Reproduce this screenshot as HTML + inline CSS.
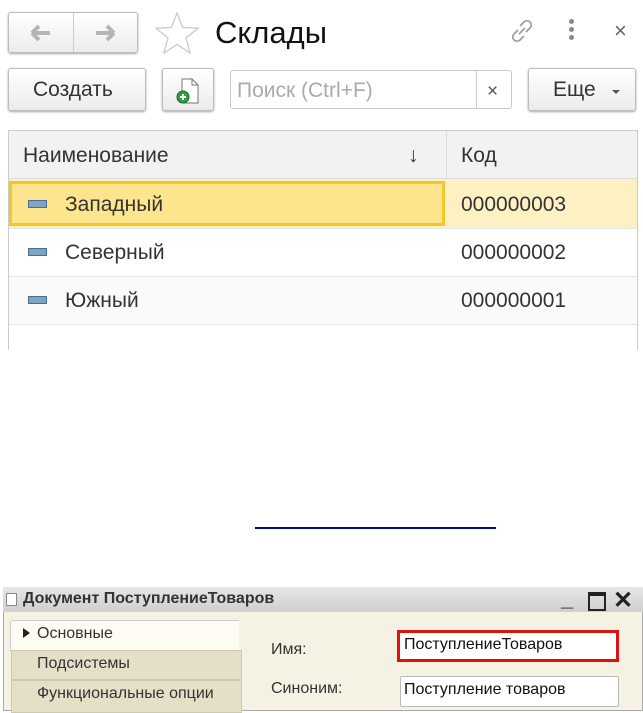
<!DOCTYPE html><html><head><meta charset="utf-8"><style>
body{margin:0;width:643px;height:711px;background:#fff;position:relative;overflow:hidden;font-family:"Liberation Sans",sans-serif;}
.a{position:absolute}
.btn{position:absolute;border:1px solid #bdbdbd;border-radius:3px;background:linear-gradient(#fff,#ececec);box-shadow:0 1px 2px rgba(0,0,0,.35);box-sizing:border-box}
.t{position:absolute;font-size:21px;color:#333}
</style></head><body>
<div class="btn" style="left:8px;top:12px;width:130px;height:41px"></div>
<div class="a" style="left:73px;top:13px;width:1px;height:39px;background:#ccc"></div>
<svg class="a" style="left:28px;top:22px" width="90" height="22"><path d="M4 11h18M4 11l7-7M4 11l7 7" stroke="#b5b5b5" stroke-width="4" fill="none"/><path d="M86 11H68M86 11l-7-7M86 11l-7 7" stroke="#b5b5b5" stroke-width="4" fill="none"/></svg>
<svg class="a" style="left:154px;top:10px" width="46" height="44"><path d="M23 3l5.6 14.5 15.4.7-12 9.8 4.1 15L23 34.5 9.9 43l4.1-15L2 18.2l15.4-.7z" fill="none" stroke="#c9c9c9" stroke-width="1.3"/></svg>
<div class="a" style="left:215px;top:15px;font-size:31px;color:#111">Склады</div>
<svg class="a" style="left:508px;top:17px" width="28" height="28"><path d="M12 9l4-4a4 4 0 016 6l-4 4M16 19l-4 4a4 4 0 01-6-6l4-4M11 17l6-6" stroke="#999" stroke-width="1.6" fill="none"/></svg>
<div class="a" style="left:569px;top:19px;width:5px;height:5px;border-radius:3px;background:#888;box-shadow:0 8px 0 #888,0 16px 0 #888"></div>
<div class="a" style="left:614px;top:18px;font-size:22px;color:#666">×</div>
<div class="btn" style="left:8px;top:68px;width:138px;height:43px"></div>
<div class="t" style="left:33px;top:78px">Создать</div>
<div class="btn" style="left:162px;top:68px;width:52px;height:43px"></div>
<svg class="a" style="left:172px;top:76px" width="32" height="30"><path d="M10 3h10l6 6v18H10z" fill="#fff" stroke="#777"/><path d="M20 3v6h6" fill="none" stroke="#777"/><circle cx="11" cy="21" r="6" fill="#2ea043" stroke="#1a6b2a"/><path d="M8 21h6M11 18v6" stroke="#fff" stroke-width="2"/></svg>
<div class="a" style="left:230px;top:70px;width:282px;height:39px;border:1px solid #c8c8c8;border-radius:3px;box-sizing:border-box"></div>
<div class="a" style="left:476px;top:71px;width:1px;height:37px;background:#ccc"></div>
<div class="t" style="left:237px;top:79px;color:#aaa">Поиск (Ctrl+F)</div>
<div class="a" style="left:487px;top:81px;font-size:19px;color:#555">×</div>
<div class="btn" style="left:528px;top:68px;width:108px;height:43px"></div>
<div class="t" style="left:553px;top:78px">Еще</div>
<div class="a" style="left:612px;top:90px;border:4px solid transparent;border-top:4px solid #555"></div>
<div class="a" style="left:8px;top:130px;width:630px;height:220px;border:1px solid #ccc;border-bottom:none;box-sizing:border-box"></div>
<div class="a" style="left:9px;top:131px;width:628px;height:47px;background:#f2f2f2;border-bottom:1px solid #ddd"></div>
<div class="a" style="left:446px;top:131px;width:1px;height:47px;background:#ddd"></div>
<div class="t" style="left:23px;top:144px">Наименование</div>
<div class="t" style="left:408px;top:144px">↓</div>
<div class="t" style="left:461px;top:144px">Код</div>
<div class="a" style="left:9px;top:179px;width:628px;height:49px;background:#fdf1c4"></div>
<div class="a" style="left:9px;top:181px;width:436px;height:45px;background:#fde58d;border:3px solid #f5c62b;box-sizing:border-box"></div>
<div class="a" style="left:9px;top:228px;width:628px;height:1px;background:#e5e5e5"></div>
<div class="a" style="left:9px;top:276px;width:628px;height:1px;background:#e5e5e5"></div>
<div class="a" style="left:9px;top:277px;width:628px;height:47px;background:#fafafa"></div>
<div class="a" style="left:9px;top:324px;width:628px;height:1px;background:#e5e5e5"></div>
<div class="a" style="left:28px;top:200px;width:17px;height:6px;background:#7fa3c6;border:1px solid #4a6e90"></div>
<div class="a" style="left:28px;top:248px;width:17px;height:6px;background:#7fa3c6;border:1px solid #4a6e90"></div>
<div class="a" style="left:28px;top:296px;width:17px;height:6px;background:#7fa3c6;border:1px solid #4a6e90"></div>
<div class="t" style="left:65px;top:193px">Западный</div><div class="t" style="left:461px;top:193px">000000003</div>
<div class="t" style="left:65px;top:241px">Северный</div><div class="t" style="left:461px;top:241px">000000002</div>
<div class="t" style="left:65px;top:289px">Южный</div><div class="t" style="left:461px;top:289px">000000001</div>
<div class="a" style="left:255px;top:527px;width:241px;height:2px;background:#000a8c"></div>
<div class="a" style="left:3px;top:587px;width:640px;height:124px;background:#f5f1e3;border:1px solid #aaa;box-sizing:border-box"></div>
<div class="a" style="left:3px;top:587px;width:640px;height:25px;background:linear-gradient(#e6e6e6,#cfcfcf)"></div>
<div class="a" style="left:6px;top:593px;width:9px;height:11px;background:#fff;border:1px solid #888"></div>
<div class="a" style="left:23px;top:590px;font-size:16px;font-weight:bold;color:#333">Документ ПоступлениеТоваров</div>
<div class="a" style="left:561px;top:586px;font-size:22px;font-weight:bold;color:#222">_</div>
<div class="a" style="left:588px;top:592px;width:14px;height:13px;border:2px solid #222;border-top-width:4px"></div>
<div class="a" style="left:613px;top:586px;font-size:24px;font-weight:bold;color:#222">✕</div>
<div class="a" style="left:10px;top:620px;width:228px;height:30px;background:#fdfbf2;border:1px solid #ccc;border-right:none;border-radius:3px 0 0 3px"></div>
<div class="a" style="left:11px;top:650px;width:229px;height:28px;background:#e6dfc8;border:1px solid #cfc8b0"></div>
<div class="a" style="left:11px;top:680px;width:229px;height:31px;background:#e6dfc8;border:1px solid #cfc8b0"></div>
<div class="a" style="left:23px;top:628px;border-left:7px solid #222;border-top:5px solid transparent;border-bottom:5px solid transparent"></div>
<div class="a" style="left:37px;top:625px;font-size:16px;color:#333">Основные</div>
<div class="a" style="left:37px;top:655px;font-size:16px;color:#333">Подсистемы</div>
<div class="a" style="left:37px;top:685px;font-size:16px;color:#333">Функциональные опции</div>
<div class="a" style="left:271px;top:641px;font-size:16px;color:#333">Имя:</div>
<div class="a" style="left:271px;top:680px;font-size:16px;color:#333">Синоним:</div>
<div class="a" style="left:397px;top:630px;width:222px;height:32px;border:3px solid #e01010;background:#fff;box-sizing:border-box"></div>
<div class="a" style="left:404px;top:636px;font-size:16px;color:#111">ПоступлениеТоваров</div>
<div class="a" style="left:400px;top:676px;width:219px;height:31px;border:1px solid #bbb;background:#fff;border-radius:2px;box-sizing:border-box"></div>
<div class="a" style="left:404px;top:681px;font-size:16px;color:#111">Поступление товаров</div>
</body></html>
